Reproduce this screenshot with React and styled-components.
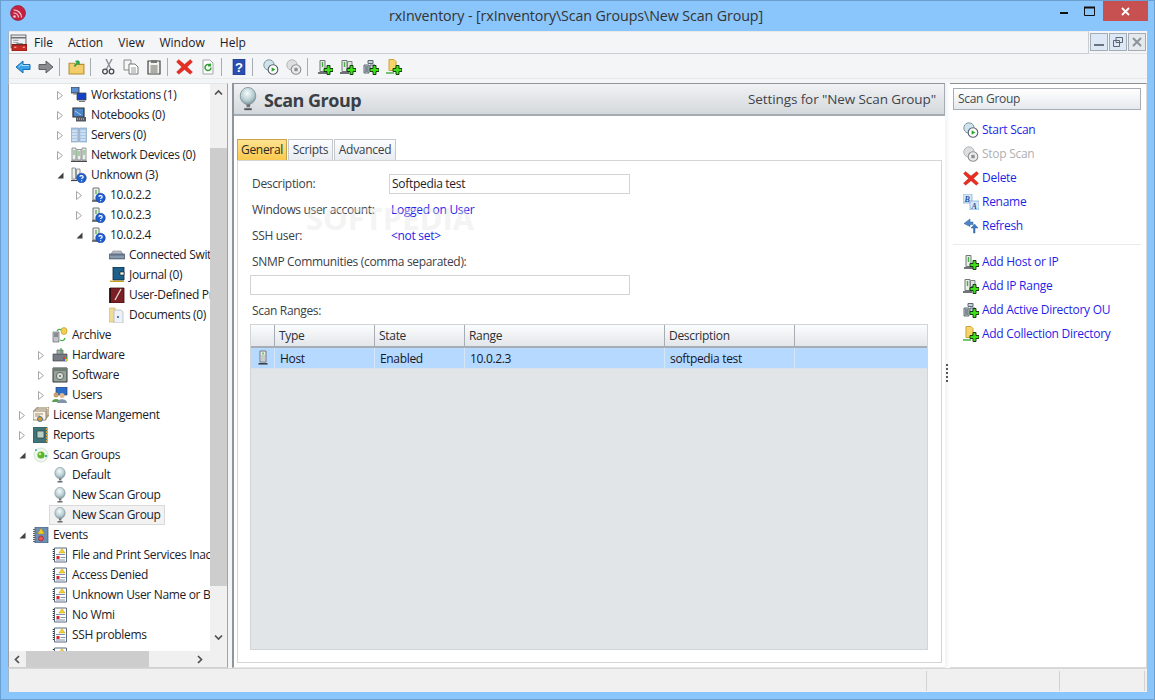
import React from 'react';
import styled, { createGlobalStyle } from 'styled-components';

const GlobalStyle = createGlobalStyle`
  html, body { margin: 0; padding: 0; background: #8ac5fb; }
  body { font-family: "Open Sans", "Noto Sans", "Liberation Sans", sans-serif; font-size: 12px; color: #1c1c28; }
  * { box-sizing: border-box; }
`;

const Window = styled.div`
  width: 1155px; height: 700px; display: flex; flex-direction: column;
  background: #8ac5fb; border: 1px solid #6b9fd0; overflow: hidden;
`;
const TitleBar = styled.div`
  height: 30px; flex: none; display: flex; align-items: flex-start;
`;
const AppIcon = styled.div` margin: 4px 0 0 9px; width: 16px; height: 16px; `;
const TitleText = styled.div`
  flex: 1; text-align: center; font-size: 14.25px; line-height: 29px; color: #333; padding-left: 74px; letter-spacing: -0.1px;
`;
const WinButtons = styled.div` display: flex; align-items: flex-start; margin-right: 6px; `;
const WinButton = styled.div`
  width: ${p => p.$w}px; height: 20px; display: flex; align-items: center; justify-content: center;
  background: ${p => p.$close ? '#c75050' : 'transparent'};
`;
const Client = styled.div`
  flex: 1; margin: 0 7px 7px; display: flex; flex-direction: column; background: #f4f5f7; min-height: 0;
  border-left: 1px solid #a3b4c4;
`;
const MenuRow = styled.div` height: 23px; flex: none; display: flex; `;
const MenuBar = styled.div`
  flex: 1; display: flex; align-items: center; border-bottom: 1px solid #c9cdd2; border-right: 1px solid #c9cdd2; border-top: 1px solid #e8e8e8; padding-left: 1px;
`;
const MenuItem = styled.span` margin-left: ${p => p.$gap}px; color: #1b1b2b; `;
const MdiButtons = styled.div` display: flex; gap: 1px; padding: 2px 1px 0 1px; border-bottom: 1px solid #e0e3e6; `;
const MdiButton = styled.div`
  width: 18px; height: 18px; display: flex; align-items: center; justify-content: center;
  background: ${p => p.$off ? '#e6e9ec' : '#dce8f5'}; border: 1px solid #a3abb5;
`;
const Toolbar = styled.div`
  height: 29px; flex: none; padding: 1px 0 0 1px;
`;
const ToolStrip = styled.div`
  width: 100%; height: 24px; display: flex; align-items: center; border-bottom: 1px solid #e8e9ea; padding-left: 1px;
`;
const ToolButton = styled.div`
  width: 23px; height: 22px; display: flex; align-items: center; justify-content: center;
  margin-left: ${p => p.$ml || 0}px;
`;
const ToolSep = styled.div` width: 1px; height: 18px; background: #a9adb2; margin: 0 5px 0 2px; `;
const Main = styled.div` flex: 1; display: flex; min-height: 0; `;

const TreePanel = styled.div`
  width: 220px; flex: none; display: flex; flex-direction: column; background: #fff;
  border-right: 1px solid #a0a4a8; border-bottom: 1px solid #d0d0d0; margin-left: -1px; border-left: 1px solid #9aa0a6; border-top: 1px solid #e4e4e4;
`;
const TreeTop = styled.div` flex: 1; display: flex; min-height: 0; `;
const TreeRows = styled.div` width: 201px; overflow: hidden; padding-top: 1px; `;
const TreeRow = styled.div`
  height: 20px; display: flex; align-items: center; white-space: nowrap; padding-left: ${p => 7 + p.$level * 19}px;
`;
const Expander = styled.div` width: 12px; height: 12px; flex: none; margin-right: 2px; display: flex; align-items: center; justify-content: center; `;
const TreeLabel = styled.div`
  display: flex; align-items: center; gap: 4px; height: 20px; padding: 0 3px 0 2px;
  border: 1px solid ${p => p.$selected ? '#d9d9d9' : 'transparent'};
  background: ${p => p.$selected ? '#f2f2f2' : 'transparent'};
  letter-spacing: -0.33px;
`;
const TreeText = styled.span` padding-bottom: 2px; `;
const VScroll = styled.div` width: 17px; flex: none; background: #f0f0f0; display: flex; flex-direction: column; align-items: center; `;
const VThumb = styled.div` width: 100%; background: #cdcdcd; flex: 1; margin: 47px 0 0; `;
const ScrollArrow = styled.div` height: 17px; width: 17px; flex: none; display: flex; align-items: center; justify-content: center; margin-left: ${p => p.$ml || 0}px; `;
const VEnd = styled.div` height: 65px; flex: none; width: 100%; display: flex; flex-direction: column; align-items: center; padding-top: 47px; `;
const HScroll = styled.div` height: 16px; flex: none; background: #f0f0f0; display: flex; align-items: center; `;
const HThumb = styled.div` width: 123px; height: 100%; background: #cdcdcd; `;

const CenterGap = styled.div` width: 4px; flex: none; background: #f4f5f7; `;
const CenterPanel = styled.div`
  width: 713px; flex: none; background: #fff; display: flex; flex-direction: column;
  border-left: 2px solid #8f959b; border-top: 1px solid #8f959b; border-bottom: 1px solid #e6e6e6;
`;
const PanelHead = styled.div`
  height: 32px; flex: none; display: flex; align-items: center; padding: 0 8px 0 2px;
  background: linear-gradient(#f1f2f4, #d4d8dc); border-bottom: 2px solid #a4abb3; border-right: 1px solid #a4abb3;
`;
const HeadTitle = styled.div` font-size: 18px; font-weight: 700; color: #3a3f45; margin-left: 4px; flex: 1; letter-spacing: -0.5px; padding-top: 2px; `;
const HeadSub = styled.div` font-size: 13.5px; color: #3f444a; letter-spacing: -0.1px; `;
const Tabs = styled.div` display: flex; gap: 1px; margin: 23px 0 0 3px; height: 21px; flex: none; `;
const Tab = styled.div`
  width: ${p => p.$w}px; display: flex; align-items: center; justify-content: center; letter-spacing: -0.3px; padding-bottom: 2px;
  color: ${p => p.$active ? '#2a2a20' : '#3a4048'};
  background: ${p => p.$active ? 'linear-gradient(#ffe390, #fbc94e)' : 'linear-gradient(#fdfdfe, #e8ecf0)'};
  border: 1px solid ${p => p.$active ? '#c9a24a' : '#c5c9ce'}; border-bottom: none;
`;
const TabBody = styled.div`
  flex: 1; margin: 0 3px 4px 3px; border: 1px solid #d5d5d5; padding: 13px 13px 12px 12px;
  display: flex; flex-direction: column; position: relative; min-height: 0;
`;
const Watermark = styled.div`
  position: absolute; left: 68px; top: 36px; font-size: 31px; font-weight: 700; letter-spacing: 0;
  color: rgba(226, 226, 226, 0.4); pointer-events: none;
`;
const FormRow = styled.div` height: 20px; display: flex; align-items: center; flex: none; margin-top: ${p => p.$mt || 0}px; margin-bottom: ${p => p.$mb ?? 6}px; `;
const FormLabel = styled.div` width: ${p => p.$auto ? 'auto' : '139px'}; padding: 0 0 2px 2px; flex: none; color: #3b4047; letter-spacing: -0.33px; white-space: nowrap; `;
const TextField = styled.input`
  width: ${p => p.$w}px; height: 20px; border: 1px solid #d2d5d8; padding: 0 2px 2px; font: inherit; color: #1c1c28; outline: none; letter-spacing: -0.3px; background: #fff;
  margin: 0; flex: none;
`;
const LinkValue = styled.a` color: #1f1fe8; margin-left: 2px; letter-spacing: -0.3px; padding-bottom: 2px; `;
const Grid = styled.div`
  flex: 1; display: flex; flex-direction: column; border: 1px solid #d2d5d8; background: #e2e5e8; min-height: 0; margin-top: 3px;
`;
const GridLine = styled.div`
  display: grid; grid-template-columns: 24px 100px 90px 200px 130px 1fr; flex: none;
`;
const HeadCell = styled.div`
  height: 23px; display: flex; align-items: center; padding-left: 4px; color: #2b3038; letter-spacing: -0.3px;
  background: linear-gradient(#fbfcfd, #e3e6ea); border-bottom: 2px solid #a6adb5; border-right: ${p => p.$last ? 'none' : '1px solid #a6adb5'};
`;
const BodyCell = styled.div`
  height: 21px; display: flex; align-items: center; padding-left: ${p => p.$icon ? 4 : 5}px; background: #b5d9ff; letter-spacing: -0.33px;
  border-right: ${p => p.$last ? 'none' : '1px solid #d4e6f8'}; border-bottom: 1px solid #d9e2ea; color: #15151f;
`;

const Splitter = styled.div`
  width: 5px; flex: none; background: linear-gradient(90deg, #f2f3f5, #fff); display: flex; flex-direction: column; align-items: center; padding-top: 281px; gap: 2px;
`;
const GripDot = styled.div` width: 2px; height: 2px; background: #55595e; margin-left: -2px; `;
const ActionsPanel = styled.div`
  flex: 1; background: #fff; border-top: 1px solid #8a8f94; border-right: 1px solid #dadada; border-bottom: 1px solid #dadada; padding: 4px 5px 0 3px;
  display: flex; flex-direction: column;
`;
const ActionsHead = styled.div`
  height: 22px; flex: none; display: flex; align-items: center; padding: 0 0 2px 4px; color: #444a52; letter-spacing: -0.3px;
  background: linear-gradient(#fff, #e6e9ed); border: 1px solid #a6adb5; margin-bottom: 8px;
`;
const ActionRow = styled.div` height: 24px; display: flex; align-items: center; gap: 3px; padding-left: 10px; flex: none; `;
const ActionText = styled.a` color: ${p => p.$off ? '#adb0b3' : '#1f1fe8'}; letter-spacing: -0.28px; white-space: nowrap; padding-bottom: 2px; `;
const ActionDivider = styled.div` height: 1px; background: #e9ebed; margin: 6px 0 5px; flex: none; `;

const StatusBar = styled.div`
  height: 24px; flex: none; background: #f0f0f0; border-top: 1px solid #d6d6d6; display: flex; margin-left: -1px; padding: 2px 2px 1px 0; border-left: 1px solid #a3b4c4;
`;
const StatusCell = styled.div`
  width: ${p => p.$w}px; flex: ${p => p.$w ? 'none' : 1}; border-right: 1px solid #d2d2d2;
`;

const Ico = ({ size = 16, children }) => (
  <svg width={size} height={size} viewBox="0 0 16 16" style={{ flex: 'none', display: 'block' }}>{children}</svg>
);

const Plus = () => (
  <path d="M7 9.5h3v-3h3v3h3v3h-3v3h-3v-3H7z" fill="#3ee01c" stroke="#0b2c08" strokeWidth=".9" />
);
const QBadge = () => (
  <g>
    <circle cx="10.5" cy="11" r="4.8" fill="#1f5fd0" stroke="#0f3a90" strokeWidth=".5" />
    <path d="M8.8 9.6c.2-1.2 3.4-1.4 3.4.3 0 1.2-1.6 1-1.6 2.2M10.6 13.2v1" stroke="#fff" strokeWidth="1.2" fill="none" />
  </g>
);
const Tower = ({ x = 3 }) => (
  <g>
    <path d={`M${x} 1.5h5v11h-5z`} fill="#e9ede6" stroke="#70767c" />
    <path d={`M${x + 2.5} 3v5`} stroke="#46b03c" strokeWidth="1.4" />
    <path d={`M${x - 2} 14h9`} stroke="#33383d" strokeWidth="1.4" />
  </g>
);
const AddHost = () => <Ico><Tower x={3} /><Plus /></Ico>;
const AddRange = () => <Ico><Tower x={2} /><path d="M7.5 2.5H12v6H7.5z" fill="#dfe3dc" stroke="#7c8288" /><Plus /></Ico>;
const AddAd = () => (
  <Ico>
    <path d="M5 1.5h5v3H5zM1 6h5v8H1zM7 6h5v4H7z" fill="#c9d3da" stroke="#5c6870" />
    <path d="M2 8h3M2 10h3M2 12h3" stroke="#39434a" />
    <Plus />
  </Ico>
);
const AddCollection = () => (
  <Ico>
    <path d="M3 .5h5l2 2v9H3z" fill="#f6d568" stroke="#c9a43c" />
    <path d="M0 14h8" stroke="#4bb04a" strokeWidth="1.5" />
    <Plus />
  </Ico>
);
const Lens = () => (
  <Ico>
    <defs>
      <radialGradient id="lensFill" cx=".45" cy=".35" r=".7">
        <stop offset="0" stopColor="#f6fbfc" /><stop offset=".6" stopColor="#b5cdd2" /><stop offset="1" stopColor="#74888d" />
      </radialGradient>
    </defs>
    <ellipse cx="8" cy="6" rx="5.2" ry="5.7" fill="url(#lensFill)" stroke="#86979c" strokeWidth=".6" />
    <path d="M7 11.5h2.4v2H7z" fill="#6d7478" />
    <path d="M5.5 14.8h5" stroke="#50565a" strokeWidth="1.3" />
  </Ico>
);
const ScanDisc = ({ off }) => (
  <Ico>
    <circle cx="6" cy="6" r="5.2" fill={off ? '#dcdedf' : '#cfe3ea'} stroke={off ? '#b4b7b9' : '#7f9aa4'} />
    <circle cx="10" cy="10.5" r="4.8" fill={off ? '#ececec' : '#fff'} stroke={off ? '#8d9093' : '#55606a'} strokeWidth="1.1" />
    {off
      ? <path d="M8.3 8.8h3.4v3.4H8.3z" fill="#8d9093" />
      : <path d="M8.6 8.2l3.8 2.3-3.8 2.3z" fill="#2da52a" />}
  </Ico>
);
const RedX = ({ size = 16 }) => (
  <Ico size={size}>
    <path d="M2.5 1.5L8 6l5.5-4.5 2 2.2-5 4.800 5 4.700-2.200 2L8 10.800l-5.300 4.400-2.200-2 5-4.700L.5 3.700z" fill="#e62e22" stroke="#b4231a" strokeWidth=".4" />
  </Ico>
);
const PageRefresh = () => (
  <Ico>
    <path d="M3 1h7l3 3v11H3z" fill="#fff" stroke="#a0a6a8" />
    <path d="M11 8.5a3 3 0 1 1-1-2.200M10.300 4.500v2.300H8" fill="none" stroke="#2fa12f" strokeWidth="1.5" />
  </Ico>
);
const Help = () => (
  <Ico>
    <path d="M2 0h12v16H2z" fill="#2a4fb0" stroke="#1b3478" strokeWidth=".6" />
    <text x="8" y="13" textAnchor="middle" fontSize="13" fontWeight="700" fontFamily="Liberation Sans" fill="#fff">?</text>
  </Ico>
);
const BackArrow = () => (
  <Ico>
    <path d="M1 8l7-6v3.500h7v5H8V14z" fill="#38a3ea" stroke="#1b6fae" />
    <path d="M3.500 8L7 5v1.500h7" fill="none" stroke="#a7dcfb" />
  </Ico>
);
const ForwardArrow = () => (
  <Ico>
    <path d="M15 8L8 2v3.500H1v5h7V14z" fill="#8a8d90" stroke="#5e6164" />
  </Ico>
);
const UpFolder = () => (
  <Ico size={17}>
    <path d="M1 5h5l1 1h8v9H1z" fill="#f3cd6a" stroke="#b48f34" />
    <path d="M6 8l4-5M10 3l-3 .3M10 3l.4 3" stroke="#27a04a" strokeWidth="1.6" fill="none" />
  </Ico>
);
const Cut = () => (
  <Ico>
    <path d="M12 0L6.500 10M6 0l5 10" stroke="#8b8f93" strokeWidth="1.4" />
    <circle cx="5" cy="12.500" r="2.300" fill="none" stroke="#45494d" strokeWidth="1.3" />
    <circle cx="11.500" cy="12.500" r="2.300" fill="none" stroke="#45494d" strokeWidth="1.3" />
  </Ico>
);
const CopyIco = () => (
  <Ico>
    <path d="M1 1h7v10H1z" fill="#f4f5f5" stroke="#888" />
    <path d="M6 5h6l3 3v7H6z" fill="#fff" stroke="#777" />
    <path d="M8 9h5M8 11h5M8 13h5" stroke="#999" />
  </Ico>
);
const Paste = () => (
  <Ico>
    <path d="M2 2h12v13H2z" fill="#f2f2ec" stroke="#444" strokeWidth="1.2" />
    <path d="M5 1h6v3H5z" fill="#777" />
    <path d="M4.500 7h7M4.500 9h7M4.500 11h7M4.500 13h7" stroke="#666" />
  </Ico>
);
const ConsoleIco = () => (
  <Ico size={17}>
    <path d="M1 1h14v12H1z" fill="#eef0f2" stroke="#6d7277" />
    <path d="M1 3.500h14" stroke="#6d7277" strokeWidth="1.5" />
    <path d="M3 6h5M3 8h5" stroke="#a4a8ac" />
    <path d="M2 10h14v6H2z" fill="#c62a22" stroke="#8c1a14" />
    <path d="M6 9.500h6" stroke="#444" strokeWidth="1.2" />
    <path d="M4 12.500h2M12 12.500h2" stroke="#f2c8c4" />
  </Ico>
);
const Logo = () => (
  <svg width="16" height="16" viewBox="0 0 16 16">
    <circle cx="8" cy="8" r="7.5" fill="#c4203f" stroke="#8e1830" strokeWidth=".6" />
    <path d="M3.500 8A4.800 4.800 0 0 1 8.500 12.500M3.500 5A7.500 7.500 0 0 1 11.500 12.500" fill="none" stroke="#f5d6dc" strokeWidth="1.2" />
    <circle cx="4.500" cy="11.500" r="1.2" fill="#f5d6dc" />
  </svg>
);
const Monitors = () => (
  <Ico>
    <path d="M0 0h8v6H0z" fill="#5b8fd0" stroke="#333" strokeWidth=".8" />
    <path d="M6 6h9v7H6z" fill="#1540c8" stroke="#444" strokeWidth=".8" />
    <path d="M2 7h4M8 14.500h6" stroke="#777" strokeWidth="1.2" />
  </Ico>
);
const NotebookIco = () => (
  <Ico>
    <path d="M2 1h11v9H2z" fill="#4e86c8" stroke="#2c2f33" strokeWidth="1.2" />
    <path d="M4 4l6 4" stroke="#a8cff0" />
    <path d="M5 10h10v4.500H5z" fill="#55595e" />
    <path d="M6 12h8" stroke="#ddd" strokeDasharray="1 1" />
  </Ico>
);
const ServersIco = () => (
  <Ico>
    <path d="M0 1h7.500v14H0zM8.500 1H16v14H8.500z" fill="#a9c6e4" stroke="#7b99b8" strokeWidth=".6" />
    <path d="M1 4h5M1 7h5M1 10h5M1 13h5M9.500 4h5M9.500 7h5M9.500 10h5M9.500 13h5" stroke="#f1f6fb" />
  </Ico>
);
const NetDevices = () => (
  <Ico>
    <path d="M1 1h4v12H1zM6 2.500h4v10.500H6zM11 1h4v12h-4z" fill="#ecefe9" stroke="#787d82" strokeWidth=".8" />
    <path d="M3 3v5M8 4v5M13 3v5" stroke="#5ab052" />
    <path d="M0 14.300h16" stroke="#3c4146" strokeWidth="1.3" />
  </Ico>
);
const UnknownGroup = () => (
  <Ico>
    <path d="M1 1h3.500v11H1zM5.500 2h3.500v10H5.500z" fill="#ecefe9" stroke="#787d82" strokeWidth=".8" />
    <path d="M0 13.500h6" stroke="#3c4146" strokeWidth="1.2" />
    <QBadge />
  </Ico>
);
const UnknownHost = () => (
  <Ico>
    <path d="M3 1h6v12H3z" fill="#ecefe9" stroke="#70767c" />
    <path d="M6 3v4" stroke="#4fb046" strokeWidth="1.3" />
    <path d="M2 14h5" stroke="#33383d" strokeWidth="1.3" />
    <QBadge />
  </Ico>
);
const SwitchIco = () => (
  <Ico>
    <path d="M2 7l2-3h8l2 3z" fill="#b9bfc6" stroke="#7c828a" strokeWidth=".6" />
    <path d="M0 7h16v5H0z" fill="#6f8299" stroke="#4b5866" strokeWidth=".6" />
    <path d="M1.500 10h13" stroke="#dce3ea" strokeDasharray="1 1" />
  </Ico>
);
const JournalIco = () => (
  <Ico>
    <path d="M4 0h11v13H4z" fill="#1c5f8c" stroke="#123" strokeWidth=".8" />
    <path d="M11 5h4v3h-4z" fill="#f3f3ea" stroke="#111" strokeWidth=".6" />
    <path d="M1 14.300h14" stroke="#c8a020" strokeWidth="1.4" />
  </Ico>
);
const RedBook = () => (
  <Ico>
    <path d="M1 1h14v15H1z" fill="#7c1f24" stroke="#3a0c10" strokeWidth=".8" />
    <path d="M12 2L6 13" stroke="#e8d8d8" strokeWidth="1.3" />
    <path d="M1 1v15" stroke="#22070a" strokeWidth="1.6" />
  </Ico>
);
const DocsIco = () => (
  <Ico>
    <path d="M0 1h6v14H0z" fill="#f2dc93" stroke="#c8ad58" strokeWidth=".6" />
    <path d="M5 3h7l2 2v11H5z" fill="#eef2f6" stroke="#a9b3bc" strokeWidth=".7" />
    <path d="M8 9h2v2H8z" fill="#4f84c4" />
  </Ico>
);
const ArchiveIco = () => (
  <Ico>
    <path d="M1 5h6v10H1z" fill="#bfc5ca" stroke="#666c72" strokeWidth=".7" />
    <path d="M2 7h4M2 9h4" stroke="#555" />
    <ellipse cx="12" cy="4" rx="3" ry="3.5" fill="#f3cf4e" stroke="#b08f20" strokeWidth=".6" />
    <path d="M5 4c1-2 3-2 4-1M13 11c-1 3-3 3-5 2" fill="none" stroke="#47b04a" strokeWidth="1.3" />
  </Ico>
);
const HardwareIco = () => (
  <Ico>
    <path d="M1 7h14v7H1z" fill="#767c82" stroke="#44494e" strokeWidth=".7" />
    <path d="M5 3h6v4H5z" fill="#a7adb2" stroke="#5a6066" strokeWidth=".7" />
    <path d="M9 1v5" stroke="#3fa840" strokeWidth="1.2" />
    <path d="M11 10h2v2h-2z" fill="#e23b2c" /><path d="M13 10h2v2h-2z" fill="#3fa840" /><path d="M11 12h2v2h-2z" fill="#2f6fd0" /><path d="M13 12h2v2h-2z" fill="#f0c030" />
  </Ico>
);
const SoftwareIco = () => (
  <Ico>
    <path d="M1 1h14v14H1z" fill="#96a198" stroke="#33383a" />
    <path d="M1 1h14v3H1z" fill="#6f7c72" />
    <circle cx="8" cy="9" r="3.6" fill="#d9dedb" stroke="#5f6a62" />
    <circle cx="8" cy="9" r="1" fill="#5f6a62" />
  </Ico>
);
const UsersIco = () => (
  <Ico>
    <path d="M4 0h11v8H4z" fill="#2d6ec8" stroke="#2a3e66" strokeWidth=".7" />
    <circle cx="4" cy="8" r="2.5" fill="#c8a070" /><path d="M0 15c0-4 8-4 8 0z" fill="#5aa04a" />
    <circle cx="10" cy="8.5" r="2.5" fill="#e0b890" /><path d="M5 16c0-5 10-5 10 0z" fill="#8095aa" />
  </Ico>
);
const LicenseIco = () => (
  <Ico>
    <path d="M4 0h12v9H4z" fill="#f1ead8" stroke="#6f5b3e" strokeWidth=".7" />
    <path d="M2 2h12v9H2z" fill="#f4eedf" stroke="#6f5b3e" strokeWidth=".7" />
    <path d="M0 4h13v9H0z" fill="#f8f3e6" stroke="#6f5b3e" strokeWidth=".7" />
    <path d="M2 7h8M2 9h5" stroke="#a58f6a" />
    <circle cx="7" cy="12" r="2.5" fill="#d8a020" stroke="#2a5fb0" strokeWidth=".8" />
  </Ico>
);
const ReportsIco = () => (
  <Ico>
    <path d="M0 0h14v16H0z" fill="#3f7478" stroke="#2c5256" strokeWidth=".7" />
    <path d="M4 4h7v7H4z" fill="#b8cfc6" stroke="#2a3c3e" strokeWidth=".7" />
    <path d="M14 1v14" stroke="#d8a040" strokeWidth="2" strokeDasharray="2 1" />
  </Ico>
);
const ScanGroups = () => (
  <Ico>
    <circle cx="8" cy="8" r="7" fill="#eef6ee" stroke="#d2e6d4" />
    <circle cx="8" cy="8" r="3.6" fill="#5db52e" />
    <circle cx="7" cy="7" r="1.3" fill="#c6ea9c" />
    <circle cx="13" cy="9" r="1.2" fill="#49a8a0" /><circle cx="3" cy="3" r="1" fill="#49a8a0" />
  </Ico>
);
const EventsIco = () => (
  <Ico>
    <path d="M2 0h13v16H2z" fill="#6e8fb5" stroke="#3f5674" strokeWidth=".7" />
    <path d="M1 2v13" stroke="#333" strokeWidth="1.5" strokeDasharray="1 1" />
    <path d="M8 1l3.500 6h-7z" fill="#f2cc28" stroke="#8a7210" strokeWidth=".4" />
    <circle cx="8" cy="11.5" r="2.5" fill="#e25a5a" stroke="#8e1c1c" strokeWidth=".6" />
  </Ico>
);
const EventItem = () => (
  <Ico>
    <path d="M2.500 1h12v14h-12z" fill="#fff" stroke="#5b6b80" />
    <path d="M1.500 2v12" stroke="#333" strokeWidth="1.5" strokeDasharray="1 1" />
    <path d="M10 1.500l3 4.500H7z" fill="#f6d430" stroke="#a88a10" strokeWidth=".4" />
    <path d="M4 7.500h9M4 13h9" stroke="#8192a6" />
    <path d="M4.500 9h3v3h-3z" fill="#d6242a" /><path d="M8.500 10.500h5" stroke="#8192a6" />
  </Ico>
);
const RenameIco = () => (
  <Ico>
    <path d="M0 0h9v9H0z" fill="#d7e9f8" stroke="#7aa6cf" strokeWidth=".7" />
    <path d="M7 7h9v9H7z" fill="#d7e9f8" stroke="#7aa6cf" strokeWidth=".7" />
    <text x="1.5" y="7.5" fontSize="8" fontWeight="700" fontStyle="italic" fontFamily="Liberation Serif" fill="#1d55a8">B</text>
    <text x="8.5" y="14.5" fontSize="8" fontWeight="700" fontStyle="italic" fontFamily="Liberation Serif" fill="#1d55a8">A</text>
  </Ico>
);
const RefreshArrows = () => (
  <Ico>
    <path d="M7 1L1 5.500l6 3V6.500h3V4H7z" fill="#4f86c8" stroke="#2d5a96" strokeWidth=".5" />
    <path d="M12 15V10h3l-3.500-4L8 10h2.500v5z" fill="#3f78c0" stroke="#2d5a96" strokeWidth=".5" />
  </Ico>
);
const HostSmall = () => (
  <Ico>
    <path d="M5 1h6v11H5z" fill="#e9ede6" stroke="#70767c" />
    <path d="M8 2.500v2" stroke="#46b03c" strokeWidth="1.4" />
    <path d="M7 5v6M9 5v6" stroke="#a6abaf" />
    <path d="M3.500 13.800h9" stroke="#33383d" strokeWidth="1.5" />
  </Ico>
);

const Collapsed = () => (
  <svg width="6" height="9" viewBox="0 0 6 9"><path d="M.5.5l5 4-5 4z" fill="#fff" stroke="#a6a6a6" /></svg>
);
const Opened = () => (
  <svg width="7" height="7" viewBox="0 0 7 7"><path d="M6.500.5v6h-6z" fill="#404040" /></svg>
);
const Chevron = ({ d }) => (
  <svg width="9" height="9" viewBox="0 0 9 9"><path d={d} fill="none" stroke="#505050" strokeWidth="1.7" /></svg>
);

const treeRows = [
  [2, 'c', Monitors, 'Workstations (1)'],
  [2, 'c', NotebookIco, 'Notebooks (0)'],
  [2, 'c', ServersIco, 'Servers (0)'],
  [2, 'c', NetDevices, 'Network Devices (0)'],
  [2, 'o', UnknownGroup, 'Unknown (3)'],
  [3, 'c', UnknownHost, '10.0.2.2'],
  [3, 'c', UnknownHost, '10.0.2.3'],
  [3, 'o', UnknownHost, '10.0.2.4'],
  [4, '', SwitchIco, 'Connected Switches'],
  [4, '', JournalIco, 'Journal (0)'],
  [4, '', RedBook, 'User-Defined Properties'],
  [4, '', DocsIco, 'Documents (0)'],
  [1, '', ArchiveIco, 'Archive'],
  [1, 'c', HardwareIco, 'Hardware'],
  [1, 'c', SoftwareIco, 'Software'],
  [1, 'c', UsersIco, 'Users'],
  [0, 'c', LicenseIco, 'License Mangement'],
  [0, 'c', ReportsIco, 'Reports'],
  [0, 'o', ScanGroups, 'Scan Groups'],
  [1, '', Lens, 'Default'],
  [1, '', Lens, 'New Scan Group'],
  [1, '', Lens, 'New Scan Group', true],
  [0, 'o', EventsIco, 'Events'],
  [1, '', EventItem, 'File and Print Services Inaccessible'],
  [1, '', EventItem, 'Access Denied'],
  [1, '', EventItem, 'Unknown User Name or Bad Password'],
  [1, '', EventItem, 'No Wmi'],
  [1, '', EventItem, 'SSH problems'],
  [1, '', EventItem, ''],
];

const scanActions = [
  [() => <ScanDisc />, 'Start Scan'],
  [() => <ScanDisc off />, 'Stop Scan', true],
  [() => <RedX />, 'Delete'],
  [RenameIco, 'Rename'],
  [RefreshArrows, 'Refresh'],
];
const addActions = [
  [AddHost, 'Add Host or IP'],
  [AddRange, 'Add IP Range'],
  [AddAd, 'Add Active Directory OU'],
  [AddCollection, 'Add Collection Directory'],
];

const ActionList = ({ items }) => items.map(([Icon, label, off]) => (
  <ActionRow key={label}>
    <Icon />
    <ActionText $off={off}>{label}</ActionText>
  </ActionRow>
));

export default function App() {
  return (
    <>
      <GlobalStyle />
      <Window>
        <TitleBar>
          <AppIcon><Logo /></AppIcon>
          <TitleText>rxInventory - [rxInventory\Scan Groups\New Scan Group]</TitleText>
          <WinButtons>
            <WinButton $w={23}>
              <svg width="10" height="10" viewBox="0 0 10 10"><path d="M1 7h8" stroke="#111" strokeWidth="2" /></svg>
            </WinButton>
            <WinButton $w={28}>
              <svg width="11" height="10" viewBox="0 0 11 10"><path d="M.5 1.5h10v8H.5z" fill="none" stroke="#111" /><path d="M0 1.5h11" stroke="#111" strokeWidth="2" /></svg>
            </WinButton>
            <WinButton $w={45} $close>
              <svg width="9" height="9" viewBox="0 0 9 9"><path d="M1 1l7 7M8 1L1 8" stroke="#fff" strokeWidth="1.8" /></svg>
            </WinButton>
          </WinButtons>
        </TitleBar>
        <Client>
          <MenuRow>
            <MenuBar>
              <ConsoleIco />
              <MenuItem $gap={7}>File</MenuItem>
              <MenuItem $gap={15}>Action</MenuItem>
              <MenuItem $gap={15}>View</MenuItem>
              <MenuItem $gap={15}>Window</MenuItem>
              <MenuItem $gap={15}>Help</MenuItem>
            </MenuBar>
            <MdiButtons>
              <MdiButton><svg width="10" height="10" viewBox="0 0 10 10"><path d="M0 8h10" stroke="#6a7480" strokeWidth="2" /></svg></MdiButton>
              <MdiButton><svg width="10" height="10" viewBox="0 0 10 10"><path d="M3 .5h6.500v5H3zM.5 3.500h6v6h-6z" fill="#dce8f5" stroke="#5d6670" /></svg></MdiButton>
              <MdiButton $off><svg width="10" height="10" viewBox="0 0 10 10"><path d="M1 1l8 8M9 1l-8 8" stroke="#8b939c" strokeWidth="2" /></svg></MdiButton>
            </MdiButtons>
          </MenuRow>
          <Toolbar>
            <ToolStrip>
              <ToolButton><BackArrow /></ToolButton>
              <ToolButton><ForwardArrow /></ToolButton>
              <ToolSep />
              <ToolButton><UpFolder /></ToolButton>
              <ToolSep />
              <ToolButton><Cut /></ToolButton>
              <ToolButton><CopyIco /></ToolButton>
              <ToolButton><Paste /></ToolButton>
              <ToolSep />
              <ToolButton><RedX size={17} /></ToolButton>
              <ToolButton><PageRefresh /></ToolButton>
              <ToolSep />
              <ToolButton><Help /></ToolButton>
              <ToolSep />
              <ToolButton $ml={1}><ScanDisc /></ToolButton>
              <ToolButton><ScanDisc off /></ToolButton>
              <ToolSep />
              <ToolButton><AddHost /></ToolButton>
              <ToolButton><AddRange /></ToolButton>
              <ToolButton><AddAd /></ToolButton>
              <ToolButton><AddCollection /></ToolButton>
            </ToolStrip>
          </Toolbar>
          <Main>
            <TreePanel>
              <TreeTop>
                <TreeRows>
                  {treeRows.map(([level, state, Icon, label, selected], i) => (
                    <TreeRow key={i} $level={level}>
                      <Expander>
                        {state === 'c' && <Collapsed />}
                        {state === 'o' && <Opened />}
                      </Expander>
                      <TreeLabel $selected={selected}>
                        <Icon />
                        <TreeText>{label}</TreeText>
                      </TreeLabel>
                    </TreeRow>
                  ))}
                </TreeRows>
                <VScroll>
                  <ScrollArrow><Chevron d="M1 6.500l3.500-3.500 3.500 3.500" /></ScrollArrow>
                  <VThumb />
                  <VEnd><Chevron d="M1 2.500l3.500 3.500 3.500-3.500" /></VEnd>
                </VScroll>
              </TreeTop>
              <HScroll>
                <ScrollArrow><Chevron d="M6 1L2.500 4.500 6 8" /></ScrollArrow>
                <HThumb />
                <ScrollArrow $ml={42}><Chevron d="M3 1l3.500 3.500L3 8" /></ScrollArrow>
              </HScroll>
            </TreePanel>
            <CenterGap />
            <CenterPanel>
              <PanelHead>
                <Ico size={24}><Lens /></Ico>
                <HeadTitle>Scan Group</HeadTitle>
                <HeadSub>Settings for "New Scan Group"</HeadSub>
              </PanelHead>
              <Tabs>
                <Tab $w={50} $active>General</Tab>
                <Tab $w={45}>Scripts</Tab>
                <Tab $w={62}>Advanced</Tab>
              </Tabs>
              <TabBody>
                <Watermark>SOFTPEDIA</Watermark>
                <FormRow>
                  <FormLabel>Description:</FormLabel>
                  <TextField $w={241} readOnly value="Softpedia test" />
                </FormRow>
                <FormRow>
                  <FormLabel>Windows user account:</FormLabel>
                  <LinkValue>Logged on User</LinkValue>
                </FormRow>
                <FormRow>
                  <FormLabel>SSH user:</FormLabel>
                  <LinkValue>&lt;not set&gt;</LinkValue>
                </FormRow>
                <FormRow $mb={3}>
                  <FormLabel $auto>SNMP Communities (comma separated):</FormLabel>
                </FormRow>
                <TextField $w={380} readOnly value="" />
                <FormRow $mt={6} $mb={0}>
                  <FormLabel>Scan Ranges:</FormLabel>
                </FormRow>
                <Grid>
                  <GridLine>
                    <HeadCell />
                    <HeadCell>Type</HeadCell>
                    <HeadCell>State</HeadCell>
                    <HeadCell>Range</HeadCell>
                    <HeadCell>Description</HeadCell>
                    <HeadCell $last />
                  </GridLine>
                  <GridLine>
                    <BodyCell $icon><HostSmall /></BodyCell>
                    <BodyCell>Host</BodyCell>
                    <BodyCell>Enabled</BodyCell>
                    <BodyCell>10.0.2.3</BodyCell>
                    <BodyCell>softpedia test</BodyCell>
                    <BodyCell $last />
                  </GridLine>
                </Grid>
              </TabBody>
            </CenterPanel>
            <Splitter>
              {[0, 1, 2, 3, 4].map(i => <GripDot key={i} />)}
            </Splitter>
            <ActionsPanel>
              <ActionsHead>Scan Group</ActionsHead>
              <ActionList items={scanActions} />
              <ActionDivider />
              <ActionList items={addActions} />
            </ActionsPanel>
          </Main>
          <StatusBar>
            <StatusCell />
            <StatusCell $w={133} />
            <StatusCell $w={85} />
          </StatusBar>
        </Client>
      </Window>
    </>
  );
}
